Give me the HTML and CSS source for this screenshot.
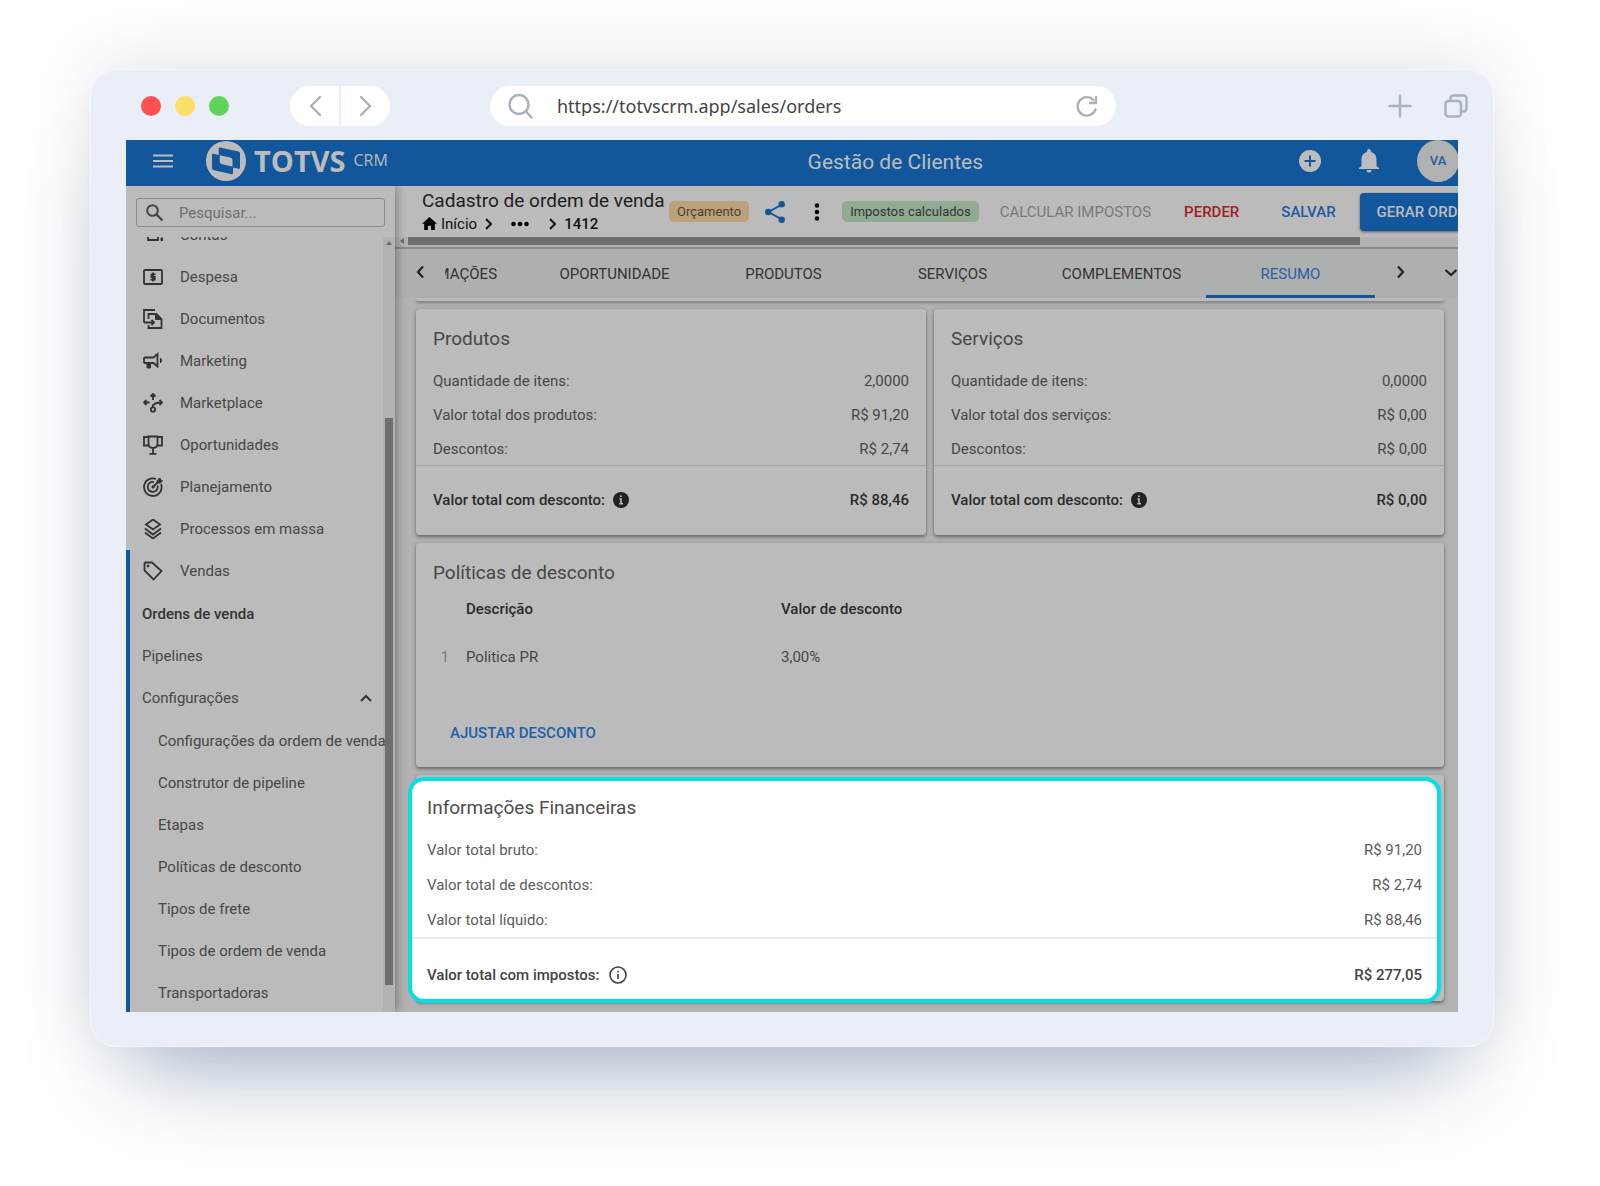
FILE: index.html
```html
<!DOCTYPE html>
<html lang="pt-BR">
<head>
<meta charset="utf-8">
<meta name="viewport" content="width=device-width, initial-scale=1">
<title>Gestão de Clientes</title>
<link rel="stylesheet" href="styles.css">
</head>
<body>
<div class="browser">
  <div class="chrome">
    <div class="lights"><span class="light light--red"></span><span class="light light--yellow"></span><span class="light light--green"></span></div>
    <div class="history">
      <button type="button" class="history__btn" aria-label="Voltar"><svg width="14" height="22" viewBox="0 0 14 22"><path d="M12 2 3 11l9 9"/></svg></button>
      <button type="button" class="history__btn" aria-label="Avançar"><svg width="14" height="22" viewBox="0 0 14 22"><path d="m2 2 9 9-9 9"/></svg></button>
    </div>
    <div class="address">
      <svg class="chrome-icon" width="26" height="26" viewBox="0 0 26 26"><circle cx="11" cy="11.500" r="9.500"/><path d="m18 18.500 5.500 6"/></svg>
      <input class="address__input" type="text" value="https://totvscrm.app/sales/orders" aria-label="Endereço">
      <button type="button" class="icon-btn" aria-label="Recarregar"><svg class="chrome-icon" width="24" height="24" viewBox="0 0 24 24"><path d="M20.500 15.500A9.200 9.200 0 1 1 18.500 6"/><path d="M21 3v6h-6"/></svg></button>
    </div>
    <div class="chrome__actions">
      <button type="button" class="icon-btn" aria-label="Nova aba"><svg class="chrome-icon" width="24" height="24" viewBox="0 0 24 24"><path d="M12 1.500v21M1.500 12h21"/></svg></button>
      <button type="button" class="icon-btn" aria-label="Abas"><svg class="chrome-icon" width="24" height="24" viewBox="0 0 24 24"><rect x="1.500" y="7" width="15.500" height="15.500" rx="3"/><path d="M6.500 6V4.500a3 3 0 0 1 3-3h10a3 3 0 0 1 3 3v10a3 3 0 0 1-3 3H18"/></svg></button>
    </div>
  </div>

  <div class="screen">
    <header class="appbar">
      <button type="button" class="icon-btn appbar__menu" aria-label="Menu"><svg width="20" height="14" viewBox="0 0 20 14"><path d="M0 1.500h20M0 7h20M0 12.500h20" stroke="currentColor" stroke-width="2"/></svg></button>
      <a href="#" class="logo">
        <svg width="40" height="40" viewBox="0 0 40 40"><circle cx="20" cy="20" r="20" fill="currentColor"/><path class="logo__mark" d="M14 6.500 32.500 10.500q1.500.500 1.500 2v14q0 1.500-1.500 1.200L27 26.500v5.500q0 1.500-1.500 1.200L8 29.200q-2-.5-2-2.200V14q0-1.500 1.500-1.200L12.700 14V7.700q0-1.400 1.300-1.200z"/><path fill="currentColor" d="m13.700 14.200 10.500 2.300q2.300.5 2.300 2.800v6.200L16 23.200q-2.300-.5-2.300-2.800z"/></svg>
        <span class="logo__name">TOTVS</span><span class="logo__product">CRM</span>
      </a>
      <h1 class="appbar__title">Gestão de Clientes</h1>
      <div class="appbar__actions">
        <button type="button" class="icon-btn" aria-label="Adicionar"><svg width="22" height="22" viewBox="0 0 22 22"><circle cx="11" cy="11" r="11" fill="currentColor"/><path d="M11 5.500v11M5.500 11h11" stroke="#12579b" stroke-width="2"/></svg></button>
        <button type="button" class="icon-btn" aria-label="Notificações"><svg width="20" height="24" viewBox="0 0 20 24" fill="currentColor"><path d="M10 23.500a2.500 2.500 0 0 0 2.500-2.500h-5a2.500 2.500 0 0 0 2.500 2.500zM17.500 17v-6.500c0-4-2-6.800-5.600-7.600V2a1.900 1.900 0 0 0-3.800 0v.9C4.500 3.700 2.500 6.500 2.500 10.500V17L0 19v1h20v-1z"/></svg></button>
        <button type="button" class="avatar">VA</button>
      </div>
    </header>

    <aside class="sidebar">
      <div class="search">
        <svg width="18" height="18" viewBox="0 0 18 18"><circle cx="6.500" cy="6.500" r="5.300" fill="none" stroke="currentColor" stroke-width="2"/><path d="m10.500 10.500 6 6" stroke="currentColor" stroke-width="2.400"/></svg>
        <input class="search__input" type="search" placeholder="Pesquisar..." aria-label="Pesquisar">
      </div>
      <div class="sidebar__body">
        <nav class="menu">
          <a href="#" class="menu__item"><svg class="mi" viewBox="0 0 20 20"><path d="M5 8v7h10V8"/><path class="mi__fill" d="M18 13h2v2.500h-2z"/></svg>Contas</a>
          <a href="#" class="menu__item"><svg class="mi" viewBox="0 0 20 20"><rect x="1" y="3" width="18" height="14" rx="1"/><path d="M12.500 7.300H8.500V10h3.200v2.700H7.500M10 5.500v9"/></svg>Despesa</a>
          <a href="#" class="menu__item"><svg class="mi" viewBox="0 0 20 20"><path d="M1 13.500V1h11M1 13.500h3M5.500 10V5h8l5 5v9h-13v-3M2.500 13.500h8M8.500 11l2.500 2.500L8.500 16"/><path class="mi__fill" d="M12.500 5v5.500h6z"/></svg>Documentos</a>
          <a href="#" class="menu__item"><svg class="mi" viewBox="0 0 20 20"><path d="M2 6.500h8.500L14.500 3v12.500l-4-3.500H2a1 1 0 0 1-1-1V7.500a1 1 0 0 1 1-1z"/><path class="mi__fill" d="M4 12h3.500v5H4zM17.500 7q2.500 2.500 0 5z"/></svg>Marketing</a>
          <a href="#" class="menu__item"><svg class="mi" viewBox="0 0 20 20"><path d="M10 7V1.500M7.500 3.500 10 1l2.500 2.500M6.500 9.500h-5M3.500 7 1 9.500 3.500 12M9.500 14.500c0-4 3-5 9-5M16.500 7 19 9.500 16.500 12"/><circle cx="10" cy="16.500" r="2.200"/></svg>Marketplace</a>
          <a href="#" class="menu__item"><svg class="mi" viewBox="0 0 20 20"><path d="M5.500 1.500h9v7c0 3-2 4.500-4.500 4.500s-4.500-1.500-4.500-4.500zM5.500 2H1v8.500h4.800M14.500 2H19v8.500h-4.800M10 13v5M6.500 18.800h7"/></svg>Oportunidades</a>
          <a href="#" class="menu__item"><svg class="mi" viewBox="0 0 20 20"><path d="M18 7a8.800 8.800 0 1 1-5-5M14.500 8.500A5 5 0 1 1 11 5.100M10 10l5-5"/><circle class="mi__fill" cx="10" cy="10" r="1.200"/><path class="mi__fill" d="m14 6 .5-3 2.500-2 .5 2 2 .5-2 2.500z"/></svg>Planejamento</a>
          <a href="#" class="menu__item"><svg class="mi" viewBox="0 0 20 20"><path d="m10 0.500 7 5-7 5-7-5zM2 9.500l8 6 8-6M2 13.500l8 6 8-6"/></svg>Processos em massa</a>
          <div class="menu__group">
            <a href="#" class="menu__item menu__item--open"><svg class="mi" viewBox="0 0 20 20"><path d="M1.500 2.500a1 1 0 0 1 1-1H9l9.500 8.500-8 8.500L1.500 9.500z"/><circle class="mi__fill" cx="5" cy="5" r="1"/></svg>Vendas</a>
            <div class="submenu">
              <a href="#" class="submenu__item submenu__item--active">Ordens de venda</a>
              <a href="#" class="submenu__item">Pipelines</a>
              <a href="#" class="submenu__item">Configurações<svg class="submenu__chevron" width="12" height="8" viewBox="0 0 12 8"><path d="m1 7 5-5 5 5"/></svg></a>
              <div class="leafmenu">
                <a href="#" class="leafmenu__item">Configurações da ordem de venda</a>
                <a href="#" class="leafmenu__item">Construtor de pipeline</a>
                <a href="#" class="leafmenu__item">Etapas</a>
                <a href="#" class="leafmenu__item">Políticas de desconto</a>
                <a href="#" class="leafmenu__item">Tipos de frete</a>
                <a href="#" class="leafmenu__item">Tipos de ordem de venda</a>
                <a href="#" class="leafmenu__item">Transportadoras</a>
              </div>
            </div>
          </div>
        </nav>
        <div class="vscroll"><svg width="6" height="4" viewBox="0 0 6 4"><path d="M0 4 3 0l3 4z"/></svg><span class="vscroll__thumb"></span></div>
      </div>
    </aside>

    <main class="main">
      <div class="toolbar">
        <div class="heading">
          <h2 class="heading__title">Cadastro de ordem de venda</h2>
          <nav class="crumbs">
            <a href="#" class="crumbs__home"><svg width="15" height="13" viewBox="0 0 15 13"><path d="M7.500 0 0 6.800h2.200V13h3.700V8.700h3.200V13h3.700V6.800H15z"/></svg>Início</a>
            <svg class="crumbs__sep" width="8" height="12" viewBox="0 0 8 12"><path d="m1 1 5 5-5 5"/></svg>
            <button type="button" class="icon-btn crumbs__more" aria-label="Mais níveis"><svg width="18" height="6" viewBox="0 0 18 6"><circle cx="2.500" cy="3" r="2.300"/><circle cx="9" cy="3" r="2.300"/><circle cx="15.500" cy="3" r="2.300"/></svg></button>
            <svg class="crumbs__sep" width="8" height="12" viewBox="0 0 8 12"><path d="m1 1 5 5-5 5"/></svg>
            <strong class="crumbs__current">1412</strong>
          </nav>
        </div>
        <span class="chip chip--orange">Orçamento</span>
        <button type="button" class="icon-btn share" aria-label="Compartilhar"><svg width="20" height="22" viewBox="0 0 20 22"><path d="M17 3.500 3.500 11 17 18.500" fill="none" stroke="currentColor" stroke-width="2"/><g fill="currentColor"><circle cx="16.700" cy="3.300" r="3.200"/><circle cx="3.200" cy="11" r="3.200"/><circle cx="16.700" cy="18.700" r="3.200"/></g></svg></button>
        <button type="button" class="icon-btn kebab" aria-label="Mais opções"><svg width="6" height="18" viewBox="0 0 6 18"><circle cx="3" cy="2.500" r="2.300"/><circle cx="3" cy="9" r="2.300"/><circle cx="3" cy="15.500" r="2.300"/></svg></button>
        <span class="chip chip--green">Impostos calculados</span>
        <button type="button" class="action" disabled>CALCULAR IMPOSTOS</button>
        <button type="button" class="action action--danger">PERDER</button>
        <button type="button" class="action action--link">SALVAR</button>
        <button type="button" class="action action--primary">GERAR ORDEM DE VENDA</button>
      </div>
      <div class="hscroll"><svg width="4" height="6" viewBox="0 0 4 6"><path d="M4 0 0 3l4 3z"/></svg><span class="hscroll__thumb"></span></div>
      <div class="tabs">
        <button type="button" class="icon-btn tabs__prev" aria-label="Anterior"><svg class="tabs__arrow" width="9" height="14" viewBox="0 0 9 14"><path d="M7 1.500 2 7l5 5.500"/></svg></button>
        <div class="tabs__list" role="tablist">
          <button type="button" role="tab" class="tab">INFORMAÇÕES</button>
          <button type="button" role="tab" class="tab">OPORTUNIDADE</button>
          <button type="button" role="tab" class="tab">PRODUTOS</button>
          <button type="button" role="tab" class="tab">SERVIÇOS</button>
          <button type="button" role="tab" class="tab">COMPLEMENTOS</button>
          <button type="button" role="tab" class="tab tab--active" aria-selected="true">RESUMO</button>
        </div>
        <button type="button" class="icon-btn tabs__next" aria-label="Próximo"><svg class="tabs__arrow" width="9" height="14" viewBox="0 0 9 14"><path d="m2 1.500 5 5.500-5 5.500"/></svg></button>
        <button type="button" class="icon-btn tabs__all" aria-label="Todas as abas"><svg class="tabs__arrow" width="14" height="9" viewBox="0 0 14 9"><path d="m1.500 2 5.500 5 5.500-5"/></svg></button>
      </div>
      <div class="content">
        <div class="card card--edge"></div>
        <div class="pair">
          <section class="card">
            <h3 class="card__title">Produtos</h3>
            <dl class="rows">
              <div class="row"><dt>Quantidade de itens:</dt><dd>2,0000</dd></div>
              <div class="row"><dt>Valor total dos produtos:</dt><dd>R$ 91,20</dd></div>
              <div class="row"><dt>Descontos:</dt><dd>R$ 2,74</dd></div>
              <div class="row row--total"><dt>Valor total com desconto:<svg class="info" width="16" height="16" viewBox="0 0 16 16"><circle cx="8" cy="8" r="8"/><path d="M6.500 7H8v4.500M6.200 11.700h3.800M7 4.300h1.800" stroke="#bbb" stroke-width="1.600" fill="none"/></svg></dt><dd>R$ 88,46</dd></div>
            </dl>
          </section>
          <section class="card">
            <h3 class="card__title">Serviços</h3>
            <dl class="rows">
              <div class="row"><dt>Quantidade de itens:</dt><dd>0,0000</dd></div>
              <div class="row"><dt>Valor total dos serviços:</dt><dd>R$ 0,00</dd></div>
              <div class="row"><dt>Descontos:</dt><dd>R$ 0,00</dd></div>
              <div class="row row--total"><dt>Valor total com desconto:<svg class="info" width="16" height="16" viewBox="0 0 16 16"><circle cx="8" cy="8" r="8"/><path d="M6.500 7H8v4.500M6.200 11.700h3.800M7 4.300h1.800" stroke="#bbb" stroke-width="1.600" fill="none"/></svg></dt><dd>R$ 0,00</dd></div>
            </dl>
          </section>
        </div>
        <section class="card">
          <h3 class="card__title">Políticas de desconto</h3>
          <table class="policies">
            <thead><tr><th class="policies__index"></th><th class="policies__name">Descrição</th><th>Valor de desconto</th></tr></thead>
            <tbody><tr><td class="policies__index">1</td><td>Politica PR</td><td>3,00%</td></tr></tbody>
          </table>
          <button type="button" class="adjust">AJUSTAR DESCONTO</button>
        </section>
        <div class="card card--spot">
          <section class="spot">
            <h3 class="card__title">Informações Financeiras</h3>
            <dl class="rows">
              <div class="row"><dt>Valor total bruto:</dt><dd>R$ 91,20</dd></div>
              <div class="row"><dt>Valor total de descontos:</dt><dd>R$ 2,74</dd></div>
              <div class="row"><dt>Valor total líquido:</dt><dd>R$ 88,46</dd></div>
              <div class="row row--total"><dt>Valor total com impostos:<svg class="info info--outline" width="18" height="18" viewBox="0 0 18 18"><circle cx="9" cy="9" r="8" fill="none" stroke="currentColor" stroke-width="1.600"/><path d="M9 8v5M9 4.700v1.800" stroke="currentColor" stroke-width="1.700"/></svg></dt><dd>R$ 277,05</dd></div>
            </dl>
          </section>
        </div>
      </div>
    </main>
  </div>
</div>
</body>
</html>
```
FILE: styles.css
```css
:root {
  --blue: #12579b;
  --surface: #bbbbbb;
  --ink: #202020;
  --text: #474747;
  --frame: #eaeff7;
  --chrome-icon: #a9b1bb;
  --pale: #bcbcbc;
}

* { box-sizing: border-box; }

body {
  margin: 0;
  padding: 70px 107px 140px 91px;
  background: #fff;
  font-family: Roboto, "Liberation Sans", sans-serif;
  font-size: 15px;
  line-height: 20px;
  color: var(--text);
  overflow-x: hidden;
}

h1, h2, h3, dl, dd { margin: 0; }
h1, h2, h3 { font-weight: 400; }
a { color: inherit; text-decoration: none; }
button, input { font: inherit; color: inherit; }
button { border: 0; background: none; padding: 0; white-space: nowrap; }
svg { flex: none; display: block; }
.icon-btn { display: flex; align-items: center; justify-content: center; flex: none; }

/* Browser frame */
.browser {
  padding: 0 35px 34px;
  border-radius: 26px;
  background: var(--frame);
  box-shadow: 0 0 1px 1px #f4f8fc, 0 60px 90px -40px rgba(50, 85, 125, .44), 0 -10px 70px -4px rgba(60, 90, 120, .16);
}
.chrome { height: 70px; padding: 2px 0 0 15px; display: flex; align-items: center; }
.lights { display: flex; gap: 14px; }
.light { width: 20px; height: 20px; border-radius: 50%; }
.light--red { background: #fb5151; }
.light--yellow { background: #fbdf67; }
.light--green { background: #60d35c; }
.history { margin-left: 61px; display: flex; gap: 2px; }
.history__btn {
  width: 49px; height: 40px; background: #fff;
  display: flex; align-items: center; justify-content: center;
}
.history__btn:first-child { border-radius: 20px 0 0 20px; }
.history__btn:last-child { border-radius: 0 20px 20px 0; }
.history svg, .chrome-icon {
  fill: none; stroke: var(--chrome-icon); stroke-width: 2.4;
  stroke-linecap: round; stroke-linejoin: round;
}
.address {
  flex: 0 1 626px; margin-left: 100px; height: 40px; padding: 0 17px 0 18px;
  border-radius: 20px; background: #fff; display: flex; align-items: center;
}
.address__input {
  flex: 1; min-width: 0; border: 0; padding: 0; margin: 0 23px; background: none; outline: 0;
  font-family: "Noto Sans", "Open Sans", sans-serif; font-size: 18px; color: #444;
}
.chrome__actions { margin-left: auto; margin-right: -10px; display: flex; gap: 32px; }

/* Application */
.screen {
  display: grid; grid-template-columns: 269px minmax(0, 1fr); grid-template-rows: 46px auto;
  background: #b2b2b2; overflow: hidden;
}
.appbar {
  grid-column: 1 / -1; background: var(--blue); color: var(--pale);
  display: grid; grid-template-columns: 20px 1fr auto 475px; align-items: center;
  padding-left: 27px; height: 46px;
}
.logo { display: flex; align-items: center; justify-self: start; margin-left: 33px; height: 46px; }
.logo svg { margin-bottom: 5px; }
.logo__mark { fill: var(--blue); }
.logo__name { font: 700 29px/40px "Open Sans", sans-serif; margin-left: 8px; padding-bottom: 5px; }
.logo__product { font: 400 16px/40px "Open Sans", sans-serif; margin-left: 8px; padding-bottom: 6px; }
.appbar__menu { padding-bottom: 4px; }
.appbar__title { font-size: 21px; line-height: 24px; padding-bottom: 2px; }
.appbar__actions {
  display: flex; align-items: center; justify-content: flex-end; gap: 38px;
  height: 42px; align-self: start;
}
.avatar {
  width: 42px; height: 42px; border-radius: 50%; margin-right: -1px;
  background: #b0b2b1; color: #2a5c9c; font-size: 13px; font-weight: 500;
}

/* Sidebar */
.sidebar {
  position: relative; z-index: 1; display: flex; flex-direction: column;
  background: var(--surface); box-shadow: 0 0 10px rgba(0, 0, 0, .45);
  clip-path: inset(0 -16px 0 0);
}
.search {
  margin: 12px 10px 10px; height: 29px; padding: 0 9px; border: 1px solid #8c8c8c;
  border-radius: 3px; display: flex; align-items: center; gap: 15px;
}
.search__input { flex: 1; min-width: 0; border: 0; padding: 0; background: none; outline: 0; }
.search__input::placeholder { color: #707070; opacity: 1; }
.sidebar__body { flex: 1; display: flex; overflow: hidden; }
.menu { position: relative; z-index: 1; flex: 1; min-width: 0; margin: -23px 0 -6px; white-space: nowrap; }
.menu__item { display: flex; align-items: center; gap: 17px; height: 42px; padding-left: 17px; }
.mi { width: 20px; height: 20px; fill: none; stroke: #333; stroke-width: 1.800; }
.mi__fill { fill: #333; stroke-width: 1; }
.menu__group { border-left: 4px solid var(--blue); }
.menu__item--open { padding-left: 13px; }
.submenu, .leafmenu { margin-top: 1px; }
.submenu__item { display: flex; align-items: center; height: 42px; padding: 0 11px 0 12px; }
.submenu__item--active { font-weight: 500; color: #333; }
.submenu__chevron { margin-left: auto; fill: none; stroke: #333; stroke-width: 2; }
.leafmenu__item { display: flex; align-items: center; height: 42px; padding-left: 28px; }
.vscroll {
  flex: none; width: 12px; padding-top: 4px; background: #b2b2b2;
  display: flex; flex-direction: column; align-items: center;
}
.vscroll svg, .hscroll svg { fill: #6c6c6c; }
.vscroll__thumb { width: 8px; height: 567px; margin-top: 173px; background: #6f6f6f; }

/* Record toolbar */
.main { min-width: 0; display: flex; flex-direction: column; }
.toolbar {
  height: 51px; padding-left: 27px; display: flex; align-items: center;
  background: var(--surface); overflow: hidden; color: var(--ink);
}
.toolbar > * { flex: none; }
.heading { width: 242px; white-space: nowrap; }
.heading__title { font-size: 19px; line-height: 22px; margin-bottom: 2px; }
.crumbs { display: flex; align-items: center; color: #111; }
.crumbs__home { display: flex; align-items: center; gap: 4px; }
.crumbs__sep { margin-left: 8px; fill: none; stroke: currentColor; stroke-width: 2; }
.crumbs__more { margin: 0 12px 0 18px; }
.crumbs__current { margin-left: 7px; font-weight: 500; }
.chip { height: 21px; border-radius: 5px; padding: 0 8px; font-size: 13px; line-height: 21px; color: #333; }
.chip--orange { margin-left: 5px; background: #bca27b; color: #4b402e; }
.chip--green { margin-left: 22px; background: #92aa91; }
.share { margin-left: 16px; color: var(--blue); }
.kebab { margin-left: 29px; }
.action { margin-left: 21px; font-weight: 500; line-height: 38px; color: #2458a0; }
.action:disabled { color: #7a7a7a; font-weight: 400; }
.action--danger { margin-left: 33px; color: #a02024; }
.action--link { margin-left: 42px; }
.action--primary {
  margin-left: 24px; padding: 0 17px; border-radius: 4px; background: var(--blue);
  color: var(--pale); box-shadow: 0 1px 3px rgba(0, 0, 0, .5);
}
.hscroll {
  height: 12px; padding: 1px 0 3px 5px; display: flex; align-items: center; gap: 4px;
  background: #b2b2b2; border-bottom: 2px solid #8b8b8b;
}
.hscroll__thumb { width: 90%; height: 8px; background: #6f6f6f; }

/* Tabs */
.tabs { height: 49px; display: flex; background: #aeb0af; color: #333; }
.tabs__prev { width: 50px; padding-bottom: 3px; }
.tabs__list { flex: 1; min-width: 0; display: flex; justify-content: flex-end; overflow: hidden; }
.tab { flex: none; width: 169px; border-bottom: 3px solid transparent; padding-top: 4px; }
.tab--active { color: #2a5fa8; border-color: var(--blue); }
.tabs__next { width: 50px; padding-bottom: 3px; }
.tabs__all { width: 33px; padding: 0 0 3px 18px; }
.tabs__arrow { fill: none; stroke: #222; stroke-width: 2.200; }

/* Cards */
.content { padding: 0 14px 11px 21px; display: flex; flex-direction: column; gap: 8px; }
.card {
  background: var(--surface); border-radius: 4px; padding: 18px 0 0;
  box-shadow: 0 2px 3px rgba(0, 0, 0, .3), 0 1px 5px rgba(0, 0, 0, .2);
}
.card--edge { height: 3px; padding: 0; border-radius: 0 0 4px 4px; box-shadow: 0 2px 3px rgba(0, 0, 0, .3); }
.pair { display: grid; grid-template-columns: 1fr 1fr; gap: 8px; }
.card__title { font-size: 19px; line-height: 24px; padding: 0 17px; margin-bottom: 12px; }
.row {
  display: flex; align-items: center; justify-content: space-between;
  height: 34px; padding: 1px 17px 0;
}
.row--total {
  height: 70px; padding-bottom: 2px; border-top: 1px solid #a3a3a3;
  font-weight: 500; color: #2b2b2b;
}
.row dt { display: flex; align-items: center; }
.info { margin-left: 8px; fill: #222; }
.policies { border-collapse: collapse; width: 100%; text-align: left; }
.policies th { height: 22px; padding: 1px 0 0; font-weight: 500; color: #2b2b2b; }
.policies td { height: 76px; padding: 0; }
.policies .policies__index { width: 50px; padding-left: 25px; color: #777; font-size: 14px; }
.policies__name { width: 315px; }
.adjust { margin: 20px 0 16px 17px; padding: 0 17px; line-height: 36px; font-weight: 500; color: #2060a8; display: block; }

/* Highlighted card, lifted over its dimmed original */
.card--spot { position: relative; height: 226px; padding: 0; }
.spot {
  position: absolute; inset: 2px 3px -2px -8px; padding-top: 15px;
  border: 4px solid #05dfe6; border-radius: 16px; background: #fff; color: #5c5c5c;
}
.spot .card__title { padding: 0 15px; color: #4c4c4c; }
.spot .row { height: 35px; padding: 1px 15px 0; }
.spot .row--total { height: 72px; border-top: 2px solid #eee; color: #444; }
.info--outline { margin-left: 10px; }
```
